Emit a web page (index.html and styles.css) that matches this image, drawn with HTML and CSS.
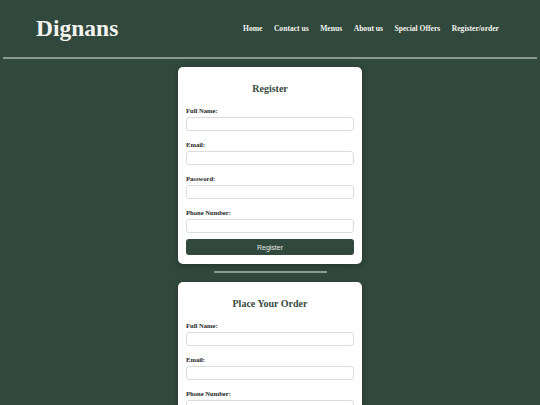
FILE: index.html
```html
<!DOCTYPE html>
<html lang="en">
<head>
<meta charset="utf-8">
<title>Dignans</title>
<link rel="stylesheet" href="styles.css">
</head>
<body>
<header class="site-header">
  <div class="logo">Dignans</div>
  <nav class="nav">
    <a href="#">Home</a>
    <a href="#">Contact us</a>
    <a href="#">Menus</a>
    <a href="#">About us</a>
    <a href="#">Special Offers</a>
    <a href="#">Register/order</a>
  </nav>
</header>
<div class="rule"></div>
<main class="content">
  <section class="card">
    <h2 class="card-title">Register</h2>
    <div class="field"><label>Full Name:</label><input type="text"></div>
    <div class="field"><label>Email:</label><input type="text"></div>
    <div class="field"><label>Password:</label><input type="password"></div>
    <div class="field last"><label>Phone Number:</label><input type="text"></div>
    <button class="btn">Register</button>
  </section>
  <div class="sep"></div>
  <section class="card">
    <h2 class="card-title">Place Your Order</h2>
    <div class="field"><label>Full Name:</label><input type="text"></div>
    <div class="field"><label>Email:</label><input type="text"></div>
    <div class="field"><label>Phone Number:</label><input type="text"></div>
  </section>
</main>
</body>
</html>
```

FILE: styles.css
```css
html, body {
  margin: 0;
  padding: 0;
}
body {
  background: #31483c;
  font-family: "Liberation Serif", "Times New Roman", serif;
  height: 405px;
  overflow: hidden;
}
.site-header {
  display: flex;
  justify-content: space-between;
  align-items: center;
  height: 57px;
  padding: 0 41px 0 36px;
}
.logo {
  color: #f3f3ef;
  font-size: 23.5px;
  font-weight: bold;
  line-height: 28px;
  padding-bottom: 1px;
}
.nav {
  display: flex;
  gap: 11.5px;
}
.nav a {
  color: #f4f4f0;
  text-decoration: none;
  font-weight: bold;
  font-size: 7.6px;
}
.rule {
  height: 2px;
  background: #8b9a91;
  margin: 0 3px;
}
.content {
  display: flex;
  flex-direction: column;
  align-items: center;
  padding-top: 8px;
}
.card {
  width: 168px;
  background: #ffffff;
  border-radius: 5px;
  padding: 15px 8px 9px;
  box-shadow: 0 2px 6px rgba(0,0,0,0.25);
}
.card-title {
  margin: 0 0 11px;
  text-align: center;
  font-size: 10px;
  line-height: 14px;
  color: #374a40;
  font-weight: bold;
}
.field {
  display: flex;
  flex-direction: column;
  margin-bottom: 10px;
}
.field.last {
  margin-bottom: 6px;
}
.field label {
  font-size: 6.6px;
  line-height: 8px;
  font-weight: bold;
  color: #1e1e1e;
  margin-bottom: 2px;
}
.field input {
  box-sizing: border-box;
  height: 14px;
  width: 100%;
  border: 1px solid #dcdcdc;
  border-radius: 3px;
  margin: 0;
  padding: 0 4px;
  background: #fff;
}
.btn {
  display: block;
  width: 100%;
  height: 16px;
  border: none;
  border-radius: 3px;
  background: #31483c;
  color: #e3e9e5;
  font-family: "Liberation Sans", Arial, sans-serif;
  font-size: 7px;
  padding: 0;
}
.sep {
  width: 113px;
  height: 2px;
  background: #8b9a91;
  margin: 7px 0 9px;
}
```
